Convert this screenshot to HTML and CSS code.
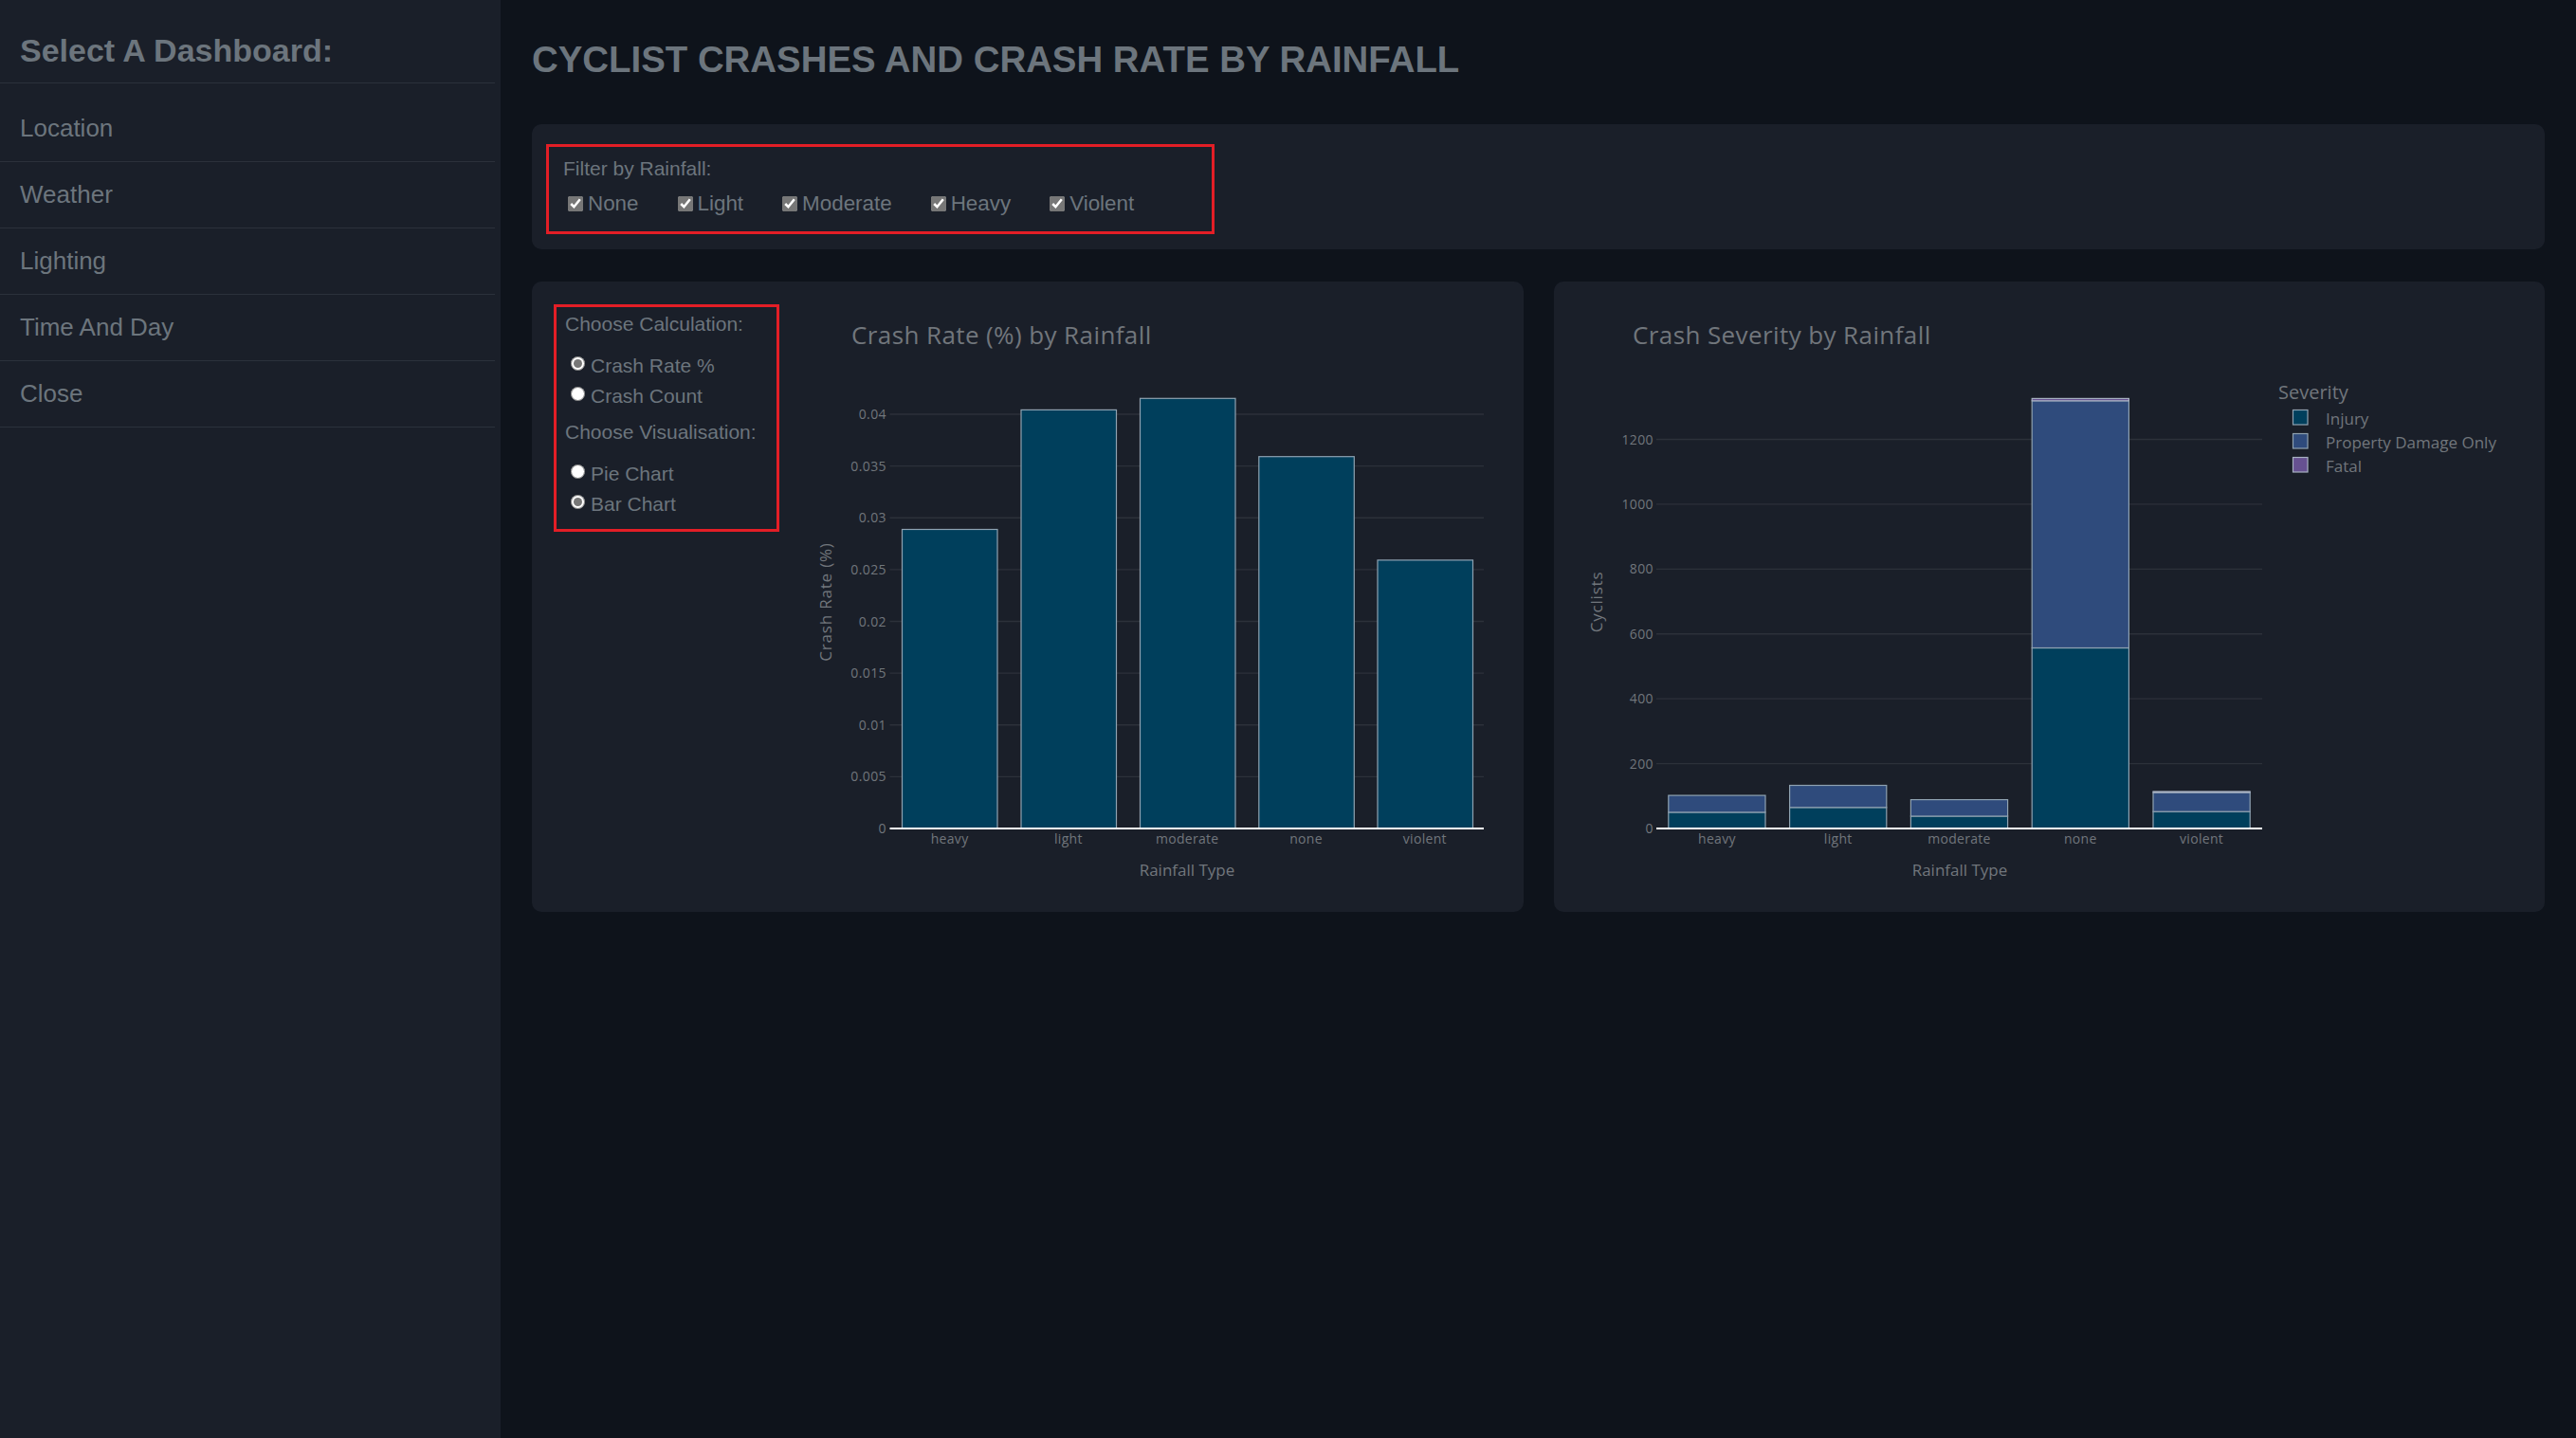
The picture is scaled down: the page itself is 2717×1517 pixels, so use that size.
FILE: index.html
```html
<!DOCTYPE html>
<html lang="en">
<head>
<meta charset="utf-8">
<title>Cyclist Crashes by Rainfall</title>
<link rel="stylesheet" href="styles.css">
</head>
<body>
<div class="app">
  <aside class="sidebar">
    <h2 class="sidebar-title">Select A Dashboard:</h2>
    <nav class="nav">
      <a class="nav-link" href="#">Location</a>
      <a class="nav-link" href="#">Weather</a>
      <a class="nav-link" href="#">Lighting</a>
      <a class="nav-link" href="#">Time And Day</a>
      <a class="nav-link" href="#">Close</a>
    </nav>
  </aside>

  <main class="main">
    <h1 class="page-title">CYCLIST CRASHES AND CRASH RATE BY RAINFALL</h1>

    <section class="card filter-card">
      <div class="red-box filter-box">
        <div class="ctrl-label">Filter by Rainfall:</div>
        <div class="check-row">
          <label class="check"><input type="checkbox" checked>None</label>
          <label class="check"><input type="checkbox" checked>Light</label>
          <label class="check"><input type="checkbox" checked>Moderate</label>
          <label class="check"><input type="checkbox" checked>Heavy</label>
          <label class="check"><input type="checkbox" checked>Violent</label>
        </div>
      </div>
    </section>

    <div class="chart-row">
      <section class="card chart-card chart-card-left">
        <div class="red-box controls">
          <div class="ctrl-label">Choose Calculation:</div>
          <div class="radio-group">
            <label class="radio"><input type="radio" name="calc" checked>Crash Rate %</label>
            <label class="radio"><input type="radio" name="calc">Crash Count</label>
          </div>
          <div class="ctrl-label ctrl-label-second">Choose Visualisation:</div>
          <div class="radio-group">
            <label class="radio"><input type="radio" name="vis">Pie Chart</label>
            <label class="radio"><input type="radio" name="vis" checked>Bar Chart</label>
          </div>
        </div>

        <svg class="chart chart-left" width="745" height="640" viewBox="845 310 745 640">
          <text class="c-title" x="898" y="363">Crash Rate (%) by Rainfall</text>
          <g class="grid">
            <line x1="938.5" x2="1565" y1="819.4" y2="819.4"/>
            <line x1="938.5" x2="1565" y1="764.75" y2="764.75"/>
            <line x1="938.5" x2="1565" y1="710.1" y2="710.1"/>
            <line x1="938.5" x2="1565" y1="655.5" y2="655.5"/>
            <line x1="938.5" x2="1565" y1="600.9" y2="600.9"/>
            <line x1="938.5" x2="1565" y1="546.25" y2="546.25"/>
            <line x1="938.5" x2="1565" y1="491.6" y2="491.6"/>
            <line x1="938.5" x2="1565" y1="437" y2="437"/>
          </g>
          <g class="ytick">
            <text x="935" y="879">0</text>
            <text x="935" y="824.4">0.005</text>
            <text x="935" y="769.75">0.01</text>
            <text x="935" y="715.1">0.015</text>
            <text x="935" y="660.5">0.02</text>
            <text x="935" y="605.9">0.025</text>
            <text x="935" y="551.25">0.03</text>
            <text x="935" y="496.6">0.035</text>
            <text x="935" y="442">0.04</text>
          </g>
          <g class="bars">
            <rect class="s-injury" x="951.5" y="558.5" width="100.5" height="315.5"/>
            <rect class="s-injury" x="1077" y="432.4" width="100.5" height="441.6"/>
            <rect class="s-injury" x="1202.5" y="420.3" width="100.5" height="453.7"/>
            <rect class="s-injury" x="1327.8" y="481.7" width="100.5" height="392.3"/>
            <rect class="s-injury" x="1453" y="590.9" width="100.5" height="283.1"/>
          </g>
          <line class="zero" x1="938.5" x2="1565" y1="874" y2="874"/>
          <g class="xtick">
            <text x="1001.6" y="890">heavy</text>
            <text x="1126.9" y="890">light</text>
            <text x="1252.2" y="890">moderate</text>
            <text x="1377.5" y="890">none</text>
            <text x="1502.8" y="890">violent</text>
          </g>
          <text class="x-title" x="1252" y="923.5">Rainfall Type</text>
          <text class="y-title" transform="translate(877 635) rotate(-90)">Crash Rate (%)</text>
        </svg>
      </section>

      <section class="card chart-card chart-card-right">
        <svg class="chart chart-right" width="1020" height="640" viewBox="1650 310 1020 640">
          <text class="c-title" x="1721" y="363">Crash Severity by Rainfall</text>
          <g class="grid">
            <line x1="1746" x2="2385" y1="805.6" y2="805.6"/>
            <line x1="1746" x2="2385" y1="737.2" y2="737.2"/>
            <line x1="1746" x2="2385" y1="668.75" y2="668.75"/>
            <line x1="1746" x2="2385" y1="600.3" y2="600.3"/>
            <line x1="1746" x2="2385" y1="531.9" y2="531.9"/>
            <line x1="1746" x2="2385" y1="463.5" y2="463.5"/>
          </g>
          <g class="ytick">
            <text x="1743" y="879">0</text>
            <text x="1743" y="810.6">200</text>
            <text x="1743" y="742.2">400</text>
            <text x="1743" y="673.75">600</text>
            <text x="1743" y="605.3">800</text>
            <text x="1743" y="536.9">1000</text>
            <text x="1743" y="468.5">1200</text>
          </g>
          <g class="bars">
            <rect class="s-injury" x="1758.8" y="856.9" width="102.2" height="17.1"/>
            <rect class="s-pdo" x="1758.8" y="839.1" width="102.2" height="17.8"/>

            <rect class="s-injury" x="1886.6" y="851.8" width="102.2" height="22.2"/>
            <rect class="s-pdo" x="1886.6" y="828.5" width="102.2" height="23.3"/>

            <rect class="s-injury" x="2014.4" y="861" width="102.2" height="13"/>
            <rect class="s-pdo" x="2014.4" y="843.6" width="102.2" height="17.4"/>

            <rect class="s-injury" x="2142.2" y="683.5" width="102.2" height="190.5"/>
            <rect class="s-pdo" x="2142.2" y="422.8" width="102.2" height="260.7"/>
            <rect class="s-fatal" x="2142.2" y="420.4" width="102.2" height="2.4"/>

            <rect class="s-injury" x="2270" y="856.2" width="102.2" height="17.8"/>
            <rect class="s-pdo" x="2270" y="836" width="102.2" height="20.2"/>
            <rect class="s-fatal" x="2270" y="835" width="102.2" height="1"/>
          </g>
          <line class="zero" x1="1746" x2="2385" y1="874" y2="874"/>
          <g class="xtick">
            <text x="1809.9" y="890">heavy</text>
            <text x="1937.7" y="890">light</text>
            <text x="2065.5" y="890">moderate</text>
            <text x="2193.3" y="890">none</text>
            <text x="2321.1" y="890">violent</text>
          </g>
          <text class="x-title" x="2066" y="923.5">Rainfall Type</text>
          <text class="y-title" transform="translate(1689 635) rotate(-90)">Cyclists</text>

          <g class="legend">
            <text class="legend-title" x="2402" y="421">Severity</text>
            <rect class="s-injury" x="2417.5" y="432.5" width="15.5" height="15.5"/>
            <text x="2452" y="447.5">Injury</text>
            <rect class="s-pdo" x="2417.5" y="457.5" width="15.5" height="15.5"/>
            <text x="2452" y="472.5">Property Damage Only</text>
            <rect class="s-fatal" x="2417.5" y="482.5" width="15.5" height="15.5"/>
            <text x="2452" y="497.5">Fatal</text>
          </g>
        </svg>
      </section>
    </div>
  </main>
</div>
</body>
</html>
```

FILE: styles.css
```css
* { box-sizing: border-box; }

html, body {
  margin: 0;
  padding: 0;
  background: #0e131b;
}

body {
  font-family: "Liberation Sans", Arial, sans-serif;
  color: #6c757d;
}

.app {
  display: flex;
  min-height: 1517px;
}

/* Sidebar */
.sidebar {
  flex: 0 0 528px;
  width: 528px;
  background: #1a1f29;
  padding-right: 6px;
}

.sidebar-title {
  margin: 0;
  padding: 33px 0 14px 21px;
  font-size: 34px;
  line-height: 40px;
  font-weight: 700;
  color: #6c757d;
  border-bottom: 1px solid #2b313b;
}

.nav {
  margin-top: 13px;
  display: flex;
  flex-direction: column;
}

.nav-link {
  display: block;
  height: 70px;
  line-height: 69px;
  padding-left: 21px;
  font-size: 26px;
  color: #6c757d;
  text-decoration: none;
  border-bottom: 1px solid #2b313b;
}

/* Main */
.main {
  flex: 1;
  padding: 41px 33px 0 33px;
}

.page-title {
  margin: 0;
  font-size: 38.4px;
  line-height: 44px;
  font-weight: 700;
  color: #6c757d;
}

.card {
  background: #1a1f29;
  border-radius: 10px;
}

.filter-card {
  margin-top: 46px;
  padding: 21px 15px 16px 15px;
}

.red-box {
  border: 3px solid #e31e26;
}

.filter-box {
  width: 705px;
  height: 95px;
  padding: 11px 15px 0 15px;
}

.ctrl-label {
  font-size: 21px;
  line-height: 24px;
  color: #6c757d;
}

.check-row {
  margin-top: 12px;
  display: flex;
  font-size: 22.4px;
  line-height: 26px;
}

.check {
  display: inline-flex;
  align-items: center;
  margin-right: 36px;
  color: #6c757d;
}

.check input {
  width: 16px;
  height: 16px;
  margin: 0 5px 0 5px;
  accent-color: #777777;
}

.chart-row {
  margin-top: 34px;
  display: grid;
  grid-template-columns: 1fr 1fr;
  gap: 32px;
}

.chart-card {
  height: 665px;
  display: flex;
  align-items: flex-start;
}

.chart-card-left {
  padding: 13px 0 0 23px;
}

.chart-card-right {
  padding: 13px 0 0 12px;
}

.controls {
  flex: 0 0 238px;
  width: 238px;
  margin-top: 11px;
  padding: 6px 9px 10px 9px;
}

.ctrl-label-second {
  margin-top: 10px;
}

.radio-group {
  margin-top: 16px;
  display: flex;
  flex-direction: column;
}

.radio {
  display: flex;
  align-items: center;
  height: 32px;
  font-size: 21px;
  color: #6c757d;
}

.radio input {
  width: 15px;
  height: 15px;
  margin: 0 6px 5px 6px;
  accent-color: #777777;
}

.chart {
  display: block;
  flex: none;
}

.chart-left {
  margin-left: 23px;
}

/* Chart internals */
.chart text {
  font-family: "Open Sans", "DejaVu Sans", sans-serif;
  fill: #71767c;
}

.chart .c-title {
  font-size: 26px;
  letter-spacing: 0.4px;
}

.chart .grid line {
  stroke: #2c313a;
  stroke-width: 1.3;
}

.chart .ytick text {
  font-size: 14px;
  text-anchor: end;
  letter-spacing: 0.4px;
}

.chart .xtick text {
  font-size: 14px;
  text-anchor: middle;
  letter-spacing: 0.3px;
}

.chart .x-title {
  font-size: 17px;
  text-anchor: middle;
}

.chart .y-title {
  font-size: 17px;
  text-anchor: middle;
  letter-spacing: 0.8px;
}

.chart .zero {
  stroke: #ffffff;
  stroke-width: 2;
}

.s-injury {
  fill: #003f5c;
  stroke: #8fa2b1;
  stroke-width: 1.2;
}

.s-pdo {
  fill: #2f4b7c;
  stroke: #8fa2b1;
  stroke-width: 1.2;
}

.s-fatal {
  fill: #665191;
  stroke: #a7b1c2;
  stroke-width: 1.2;
}

.legend text {
  font-size: 17px;
}

.legend .legend-title {
  font-size: 20px;
}
```
